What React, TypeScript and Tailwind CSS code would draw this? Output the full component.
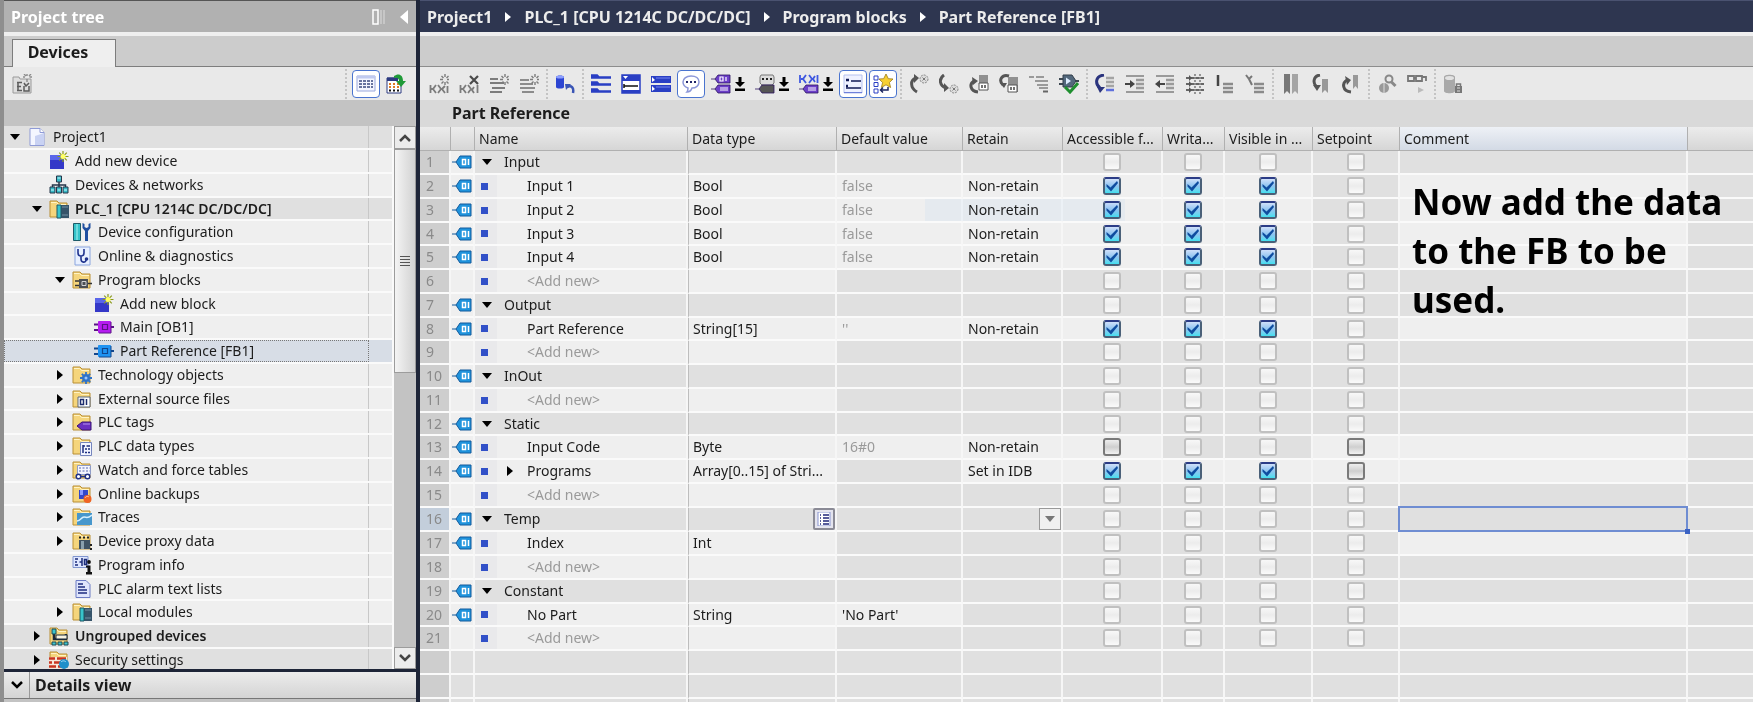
import React, { useState } from 'react'

type Check = 'on' | 'off' | 'disabled'

interface BlockRow {
  kind: 'section' | 'variable' | 'add' | 'blank'
  name?: string
  dataType?: string
  defaultValue?: string
  dimmed?: boolean
  retain?: string
  checks?: Check[]
  expandable?: boolean
}

interface TreeItem {
  label: string
  level: number
  icon: string
  state?: 'open' | 'closed'
  shaded?: boolean
  bold?: boolean
  selected?: boolean
}

const allOn: Check[] = ['on', 'on', 'on', 'disabled']
const allDisabled: Check[] = ['disabled', 'disabled', 'disabled', 'disabled']

const rows: BlockRow[] = [
  { kind: 'section', name: 'Input' },
  { kind: 'variable', name: 'Input 1', dataType: 'Bool', defaultValue: 'false', dimmed: true, retain: 'Non-retain', checks: allOn },
  { kind: 'variable', name: 'Input 2', dataType: 'Bool', defaultValue: 'false', dimmed: true, retain: 'Non-retain', checks: allOn },
  { kind: 'variable', name: 'Input 3', dataType: 'Bool', defaultValue: 'false', dimmed: true, retain: 'Non-retain', checks: allOn },
  { kind: 'variable', name: 'Input 4', dataType: 'Bool', defaultValue: 'false', dimmed: true, retain: 'Non-retain', checks: allOn },
  { kind: 'add' },
  { kind: 'section', name: 'Output' },
  { kind: 'variable', name: 'Part Reference', dataType: 'String[15]', defaultValue: "''", dimmed: true, retain: 'Non-retain', checks: allOn },
  { kind: 'add' },
  { kind: 'section', name: 'InOut' },
  { kind: 'add' },
  { kind: 'section', name: 'Static' },
  { kind: 'variable', name: 'Input Code', dataType: 'Byte', defaultValue: '16#0', dimmed: true, retain: 'Non-retain', checks: ['off', 'disabled', 'disabled', 'off'] },
  { kind: 'variable', name: 'Programs', dataType: 'Array[0..15] of Stri...', retain: 'Set in IDB', checks: ['on', 'on', 'on', 'off'], expandable: true },
  { kind: 'add' },
  { kind: 'section', name: 'Temp' },
  { kind: 'variable', name: 'Index', dataType: 'Int' },
  { kind: 'add' },
  { kind: 'section', name: 'Constant' },
  { kind: 'variable', name: 'No Part', dataType: 'String', defaultValue: "'No Part'" },
  { kind: 'add' },
  { kind: 'blank' },
  { kind: 'blank' },
  { kind: 'blank' },
]

const treeItems: TreeItem[] = [
  { label: 'Project1', level: 0, icon: 'project', state: 'open', shaded: true },
  { label: 'Add new device', level: 1, icon: 'addNew' },
  { label: 'Devices & networks', level: 1, icon: 'network' },
  { label: 'PLC_1 [CPU 1214C DC/DC/DC]', level: 1, icon: 'plc', state: 'open', shaded: true, bold: true },
  { label: 'Device configuration', level: 2, icon: 'config' },
  { label: 'Online & diagnostics', level: 2, icon: 'diagnostics' },
  { label: 'Program blocks', level: 2, icon: 'blocks', state: 'open' },
  { label: 'Add new block', level: 3, icon: 'addNew' },
  { label: 'Main [OB1]', level: 3, icon: 'ob' },
  { label: 'Part Reference [FB1]', level: 3, icon: 'fb', selected: true },
  { label: 'Technology objects', level: 2, icon: 'technology', state: 'closed' },
  { label: 'External source files', level: 2, icon: 'external', state: 'closed' },
  { label: 'PLC tags', level: 2, icon: 'tags', state: 'closed' },
  { label: 'PLC data types', level: 2, icon: 'dataTypes', state: 'closed' },
  { label: 'Watch and force tables', level: 2, icon: 'watch', state: 'closed' },
  { label: 'Online backups', level: 2, icon: 'backups', state: 'closed' },
  { label: 'Traces', level: 2, icon: 'traces', state: 'closed' },
  { label: 'Device proxy data', level: 2, icon: 'proxy', state: 'closed' },
  { label: 'Program info', level: 2, icon: 'info' },
  { label: 'PLC alarm text lists', level: 2, icon: 'textList' },
  { label: 'Local modules', level: 2, icon: 'plc', state: 'closed' },
  { label: 'Ungrouped devices', level: 1, icon: 'ungrouped', state: 'closed', shaded: true, bold: true },
  { label: 'Security settings', level: 1, icon: 'security', state: 'closed', shaded: true },
]

const levelPadding = ['pl-px', 'pl-[23px]', 'pl-[46px]', 'pl-[68px]']

const Folder = () => (
  <>
    <path d="M1 2h7l2 2h8v14H1z" fill="#f5d57c" stroke="#b98f35" />
    <path d="M2 3.500h5.500l2 2H17" fill="none" stroke="#fff3c4" />
  </>
)

const Spark = ({ color, core }: { color: string; core: string }) => (
  <>
    <path d="M14 0v11M8.500 5.500h11M10.200 1.700l7.600 7.600M17.800 1.700l-7.600 7.600" stroke={color} strokeWidth="1.200" />
    <circle cx="14" cy="5.500" r="2.500" fill={core} />
  </>
)

const BlockShape = ({ fill, dark }: { fill: string; dark: string }) => (
  <>
    <path d="M0 7.500h5M0 13h5M16 10h4" stroke={dark} strokeWidth="2" />
    <path d="M4.500 4.500h12v11h-12z" fill={fill} stroke={fill} />
    <path d="M5 16h12V5" fill="none" stroke={dark} />
    <path d="M8.500 7.500h5v5h-5z" fill="none" stroke={dark} strokeWidth="1.200" />
  </>
)

// Icons of the project tree, all on a 20 x 20 canvas
const treeIcons: Record<string, React.ReactNode> = {
  project: (
    <>
      <path d="M3 1.500h10l4 4v13H3z" fill="#f4f6ff" stroke="#8f9bd6" />
      <path d="M8 18V9l9-3v12z" fill="#c9d2f3" />
      <path d="M13 1.500v4h4" fill="#fff" stroke="#8f9bd6" />
    </>
  ),
  addNew: (
    <>
      <path d="M1 4h14v14H1z" fill="#3438c8" />
      <path d="M1 4h14v5H1z" fill="#5a66ea" />
      <Spark color="#8b9a1c" core="#ffff66" />
    </>
  ),
  network: (
    <>
      <path d="M10 6v6M3.500 13v-3h13v3" fill="none" stroke="#26364a" strokeWidth="1.500" />
      <path d="M7.500 1h5v6h-5zM1 12h5v6H1zM7.500 12h5v6h-5zM14 12h5v6h-5z" fill="#35b9c6" stroke="#26364a" />
      <path d="M8.500 3h3M2 15h3M8.500 15h3M15 15h3" stroke="#c9fbff" />
    </>
  ),
  plc: (
    <>
      <Folder />
      <path d="M8 6h12v13H8z" fill="#36546a" />
      <path d="M8 6h4v13H8z" fill="#38c4cc" stroke="#1c5664" />
      <path d="M13 8h6M13 16h6" stroke="#7391a4" />
    </>
  ),
  config: (
    <>
      <path d="M1.500 1.500h7v17h-7z" fill="#35c3c9" stroke="#1d5b68" />
      <path d="M5 2v16" stroke="#a9f2f2" />
      <path d="M10.500 1v5l2.500 3v10h3V9l2.500-3V1l-2 1v3l-2 1-2-1V2z" fill="#1f4fa0" />
    </>
  ),
  diagnostics: (
    <>
      <path d="M3 1h15v18H3z" fill="#e8f0ff" stroke="#8aa5df" />
      <path d="M6 3v4c0 4 6 4 6 0V3M9 10v3c0 4 5 4 5 1" fill="none" stroke="#20348f" strokeWidth="1.600" />
      <circle cx="14.500" cy="13" r="1.800" fill="#20348f" />
    </>
  ),
  blocks: (
    <>
      <Folder />
      <path d="M3 11h4M3 15.500h4M16 13.500h4" stroke="#333" strokeWidth="1.600" />
      <path d="M7 9h9v9H7z" fill="#4b4f54" />
      <path d="M10 11.500h4v4h-4z" fill="none" stroke="#d4d4d4" />
    </>
  ),
  ob: <BlockShape fill="#b51cf0" dark="#5a1285" />,
  fb: <BlockShape fill="#1f93f2" dark="#12468c" />,
  technology: (
    <>
      <Folder />
      <circle cx="14" cy="13" r="4" fill="#2f73c8" />
      <path d="M14 7v12M8 13h12M9.800 8.800l8.400 8.400M18.200 8.800l-8.400 8.400" stroke="#2f73c8" strokeWidth="1.800" />
      <circle cx="14" cy="13" r="1.500" fill="#9cc8ff" />
    </>
  ),
  external: (
    <>
      <Folder />
      <path d="M6 8h12v10H6z" fill="#fff" stroke="#59667d" />
      <path d="M8.500 10.500h3v5h-3zM14.500 10v6" fill="none" stroke="#1c2c6e" strokeWidth="1.500" />
    </>
  ),
  tags: (
    <>
      <Folder />
      <path d="M5 14l5-4h9v8h-9z" fill="#6a2fc0" stroke="#3b1475" />
      <path d="M11 12h7" stroke="#b694ee" />
    </>
  ),
  dataTypes: (
    <>
      <Folder />
      <path d="M8.500 6.500h11v13h-11z" fill="#f2f5ff" stroke="#7585bd" />
      <path d="M11 9v8M11 10h2M14.500 10H18M13 13h2M16 13h2M13 16.500h2M16 16.500h2" stroke="#1e2f80" strokeWidth="1.500" />
    </>
  ),
  watch: (
    <>
      <Folder />
      <path d="M5.500 5.500h13v9h-13z" fill="#f4f6ff" stroke="#8e9cc7" />
      <path d="M7 8h11M7 11h11" stroke="#5667ae" strokeDasharray="2 1.500" />
      <path d="M9 16.500h4" stroke="#213387" strokeWidth="1.500" />
      <circle cx="6.500" cy="16.500" r="2.300" fill="#fff" stroke="#213387" strokeWidth="1.500" />
      <circle cx="15.500" cy="16.500" r="2.300" fill="#fff" stroke="#213387" strokeWidth="1.500" />
    </>
  ),
  backups: (
    <>
      <Folder />
      <path d="M7 6h9v9H7z" fill="#3347c9" />
      <path d="M8 6h3v5H8z" fill="#8b9bff" />
      <circle cx="15.500" cy="15" r="4" fill="#f06423" />
      <path d="M13 14c1-2 3-2 4-1" fill="none" stroke="#ffb38a" />
    </>
  ),
  traces: (
    <>
      <Folder />
      <path d="M5 6h15v12H5z" fill="#4797cc" />
      <path d="M5 14c4 0 4-4 7-4s3 2 8-2" fill="none" stroke="#d6f0ff" strokeWidth="1.500" />
    </>
  ),
  proxy: (
    <>
      <Folder />
      <path d="M7 9h11v9H7z" fill="#3f5363" />
      <path d="M7 6.500h2M11 6.500h2M15 6.500h2" stroke="#222" strokeWidth="2" />
      <path d="M9 10h3v8H9z" fill="#89a0ad" />
      <path d="M19 13v2M19 17v2" stroke="#222" strokeWidth="2" />
    </>
  ),
  info: (
    <>
      <path d="M1 1.500h15v11H1z" fill="#dfe7ff" stroke="#8095cf" />
      <path d="M3 4h3M3 7h2M3 10h3M7.500 7h2M10 3v8M12.500 4.500h2v5h-2z" stroke="#1d2d7a" strokeWidth="1.500" fill="none" />
      <circle cx="17" cy="7" r="1.900" fill="#111" />
      <path d="M14 10.500h4.500v6.500H20v2.500h-6V17h1.500v-4.500H14z" fill="#111" />
    </>
  ),
  textList: (
    <>
      <path d="M4 1.500h10l4 4v13H4z" fill="#dfe5fb" stroke="#6c7cc4" />
      <path d="M6 5h5M6 8h7M6 11h9M6 14h9" stroke="#1e2c80" strokeWidth="1.600" />
    </>
  ),
  ungrouped: (
    <>
      <Folder />
      <path d="M5 4v9h12V8" fill="none" stroke="#1c2a3a" strokeWidth="2.500" />
      <path d="M3 3h4v5H3z" fill="#3cc4cc" stroke="#1c4b55" />
      <path d="M7 9h11v4H7z" fill="#f6f2e0" stroke="#1c2a3a" />
      <path d="M3 16h4v3H3zM9 16h4v3H9zM15 16h4v3h-4z" fill="#3cc4cc" stroke="#1c4b55" />
    </>
  ),
  security: (
    <>
      <Folder />
      <path d="M0 7h18v12H0z" fill="#f6e6da" />
      <path d="M0 8.500h6M8 8.500h9M0 12.500h3M5 12.500h7M0 16.500h7M9 16.500h5" stroke="#c8341f" strokeWidth="2.600" />
      <circle cx="15" cy="14" r="5" fill="#1f8fc9" />
      <path d="M12 12c2-2 4-1 5 0" stroke="#a5e0fa" fill="none" />
    </>
  ),
}

const gray = '#7c7c7c'
const blue = '#2a3fc4'

const RowBars = ({ x = 9, color = '#9a9a9a' }: { x?: number; color?: string }) => (
  <path d={`M${x} 6h${19 - x}M${x} 10h${19 - x}M${x} 14h${19 - x}`} stroke={color} strokeWidth="2.500" />
)

const GraySpark = () => <path d="M16 0v3M16 8v3M11 5.500h3M18 5.500h2M12.500 2l2 2M19.500 2l-2 2M12.500 9.500l2-2M19.500 9.500l-2-2" stroke={gray} strokeWidth="1.400" />

const Tag = ({ y, fill }: { y: number; fill: string }) => (
  <path d={`M0 ${y + 4}h4l3-4h12v8H7l-3-4`} fill={fill} stroke="#2b1560" strokeWidth=".8" />
)

// Icons of the editor toolbar
const toolIcons: Record<string, React.ReactNode> = {
  insertRow: (
    <>
      <path d="M1.500 11v8M2 15h2l3-4M4 15l3 4M9 11l3 4-3 4M13 15l3-3M13 15l3 4M18.500 12v7" stroke={gray} strokeWidth="1.800" fill="none" />
      <GraySpark />
    </>
  ),
  deleteRow: (
    <>
      <path d="M1.500 11v8M2 15h2l3-4M4 15l3 4M9 11l3 4-3 4M15 13l-2 3 2 3M18.500 11v8" stroke={gray} strokeWidth="1.800" fill="none" />
      <path d="M11 2l8 8M19 2l-8 8" stroke="#4a4a4a" strokeWidth="2.200" />
    </>
  ),
  addRow: (
    <>
      <path d="M1 5h8M1 9h14M3 14h13M1 18h12" stroke={gray} strokeWidth="2.200" />
      <GraySpark />
    </>
  ),
  addRowBelow: (
    <>
      <path d="M1 6h9M1 10h13M1 14h15M3 18h12" stroke="#8c8c8c" strokeWidth="2.200" />
      <GraySpark />
    </>
  ),
  reset: (
    <>
      <path d="M1 3c0-2 8-2 8 0v10c0 2-8 2-8 0z" fill="#2c45d2" />
      <ellipse cx="5" cy="3" rx="4" ry="1.500" fill="#8ea0ff" />
      <path d="M12 13c5-2 7 1 6 6" fill="none" stroke="#3a55b5" strokeWidth="2.500" />
      <path d="M10 10l6 0-5 6z" fill="#3a55b5" />
    </>
  ),
  expandAll: (
    <path d="M0 1.500h6l2 2h12M0 3.500h20M0 8.500h6l2 2h12M0 10.500h20M0 15.500h6l2 2h12M0 17.500h20" stroke={blue} strokeWidth="2.400" fill="none" />
  ),
  splitView: (
    <>
      <path d="M1 1h18v18H1z" fill="#fff" stroke={blue} strokeWidth="1.500" />
      <path d="M1 1h18v6H1zM1 16h18v3H1z" fill={blue} />
      <path d="M2 2h5L4.500 5z" fill="#fff" />
      <path d="M3 12h14M3 10v4" stroke="#111" strokeWidth="1.500" />
    </>
  ),
  collapse: (
    <>
      <path d="M0 2h20v7H0zM0 11h20v7H0z" fill={blue} />
      <path d="M1 3l3 3-3 2zM1 12l3 3-3 2z" fill="#fff" />
      <path d="M5 4h14M5 13h14" stroke="#7585f0" />
    </>
  ),
  comment: (
    <>
      <path d="M10 2c5 0 8 2.500 8 6s-3 6-7 6c-1 3-3 4-5 4 1-1 1-3 1-4-3-1-5-3-5-6s3-6 8-6z" fill="#fff" stroke="#8c97d8" strokeWidth="1.500" />
      <path d="M5 8h2M9 8h2M13 8h2" stroke="#20266b" strokeWidth="2" />
    </>
  ),
  tagPair: (
    <>
      <Tag y={1} fill="#6d3fc9" />
      <Tag y={11} fill="#6d3fc9" />
      <path d="M9 3h3v4H9zM15 3v4M9 14h8M9 16h8" stroke="#fff" strokeWidth="1.200" fill="none" />
    </>
  ),
  tagComment: (
    <>
      <path d="M6 1h12l1 2v6l-2 2H7L5 9V3z" fill="#dcdcdc" stroke="#777" />
      <path d="M7 5h2M11 5h2M15 5h2" stroke="#222" strokeWidth="2" />
      <Tag y={11} fill="#555" />
    </>
  ),
  tagValue: (
    <>
      <path d="M1 1v8M2 5h2l3-4M4 5l3 4M10 1l3 4-3 4M16 2l-2 3 2 3M18.500 1v8" stroke="#3f58e0" strokeWidth="1.800" fill="none" />
      <Tag y={11} fill="#6d3fc9" />
      <path d="M9 14h8M9 16h8" stroke="#fff" />
    </>
  ),
  listView: (
    <>
      <path d="M1 1h18v18H1z" fill="#eef1ff" stroke="#b6c2ef" />
      <path d="M8 7h10M3 14h15" stroke="#111a55" strokeWidth="1.500" />
      <path d="M3 6h3M3 12h2" stroke="#111a55" strokeWidth="2.500" />
      <path d="M1 18.500h18" stroke="#6f80da" />
    </>
  ),
  favorites: (
    <>
      <path d="M1 2h4v4H1zM1 8.500h4v4H1zM1 15h4v4H1z" fill="#fff" stroke={blue} />
      <path d="M13 0l2.300 4.700 4.700.3-3.600 3.500 1.200 5-4.600-2.700-4.600 2.700 1.200-5L6 5l4.700-.3z" fill="#f7cf33" stroke="#9a7a18" strokeWidth=".8" />
      <path d="M15 13v3H8M10 13.500L7.500 16l2.500 2.500" stroke="#1b2560" strokeWidth="1.500" fill="none" />
    </>
  ),
  prevError: (
    <>
      <path d="M8 18C1 14 1 6 7 4" fill="none" stroke="#555" strokeWidth="3" />
      <path d="M5 0l5 4-5 5z" fill="#555" />
      <circle cx="15" cy="5" r="4" fill="#ddd" stroke="#888" strokeDasharray="2 1" />
      <path d="M13.500 3.500l3 3M16.500 3.500l-3 3" stroke="#777" />
    </>
  ),
  nextError: (
    <>
      <path d="M5 1C-1 5 1 12 7 14" fill="none" stroke="#555" strokeWidth="3" />
      <path d="M5 9l5 5-5 4z" fill="#555" />
      <circle cx="15" cy="15" r="4" fill="#ddd" stroke="#888" strokeDasharray="2 1" />
      <path d="M13.500 13.500l3 3M16.500 13.500l-3 3" stroke="#777" />
    </>
  ),
  upload: (
    <>
      <path d="M9 18C1 17 0 10 5 7" fill="none" stroke="#555" strokeWidth="3" />
      <path d="M3 3l6 4-5 4z" fill="#555" />
      <path d="M10 1h9v15h-9z" fill="#909090" />
      <path d="M10 9h9v7h-9z" fill="#fff" stroke="#555" />
      <path d="M13 11v3M16 11v3" stroke="#444" strokeWidth="1.500" />
    </>
  ),
  download: (
    <>
      <path d="M10 2C3 0-1 6 4 11" fill="none" stroke="#555" strokeWidth="3" />
      <path d="M1 9l7 0-3 5z" fill="#555" />
      <path d="M9 3h10v15H9z" fill="#909090" />
      <path d="M9 11h9v7H9z" fill="#fff" stroke="#555" />
      <path d="M12 13v3M15 13v3" stroke="#444" strokeWidth="1.500" />
    </>
  ),
  absolute: (
    <>
      <path d="M0 3h5M7 3h8M6 7h13M8 11h11M10 14h9" stroke="#9a9a9a" strokeWidth="2.200" />
      <path d="M14 17.500h5" stroke="#666" strokeWidth="2" />
    </>
  ),
  compile: (
    <>
      <path d="M0 5h5M0 10h5M15 7h5" stroke="#3d4852" strokeWidth="2" />
      <path d="M4 1h9l4 6-4 6H4z" fill="#53687c" stroke="#333f4a" />
      <path d="M7 3.500l5 3.500-5 3.500z" fill="#dcecff" />
      <path d="M6 13l5 5 8-9" fill="none" stroke="#1f8f2f" strokeWidth="3" />
    </>
  ),
  gotoNetwork: (
    <>
      <path d="M9 1C0 2 0 10 5 14" fill="none" stroke="#2b347e" strokeWidth="3" />
      <path d="M2 13l8 0-5 6z" fill="#2b347e" />
      <path d="M11 4h8M11 8h8M11 12h8" stroke="#a4a4a4" strokeWidth="2.500" />
      <path d="M11 16h8" stroke="#5f70dc" strokeWidth="2.500" />
    </>
  ),
  indent: (
    <>
      <path d="M1 2h18M1 18h18" stroke="#9a9a9a" strokeWidth="2" />
      <RowBars x={11} />
      <path d="M0 10h7" stroke="#444" strokeWidth="2" />
      <path d="M5 6l5 4-5 4z" fill="#444" />
    </>
  ),
  outdent: (
    <>
      <path d="M1 2h18M1 18h18" stroke="#9a9a9a" strokeWidth="2" />
      <RowBars x={11} />
      <path d="M3 10h7" stroke="#444" strokeWidth="2" />
      <path d="M5 6l-5 4 5 4z" fill="#444" />
    </>
  ),
  grid: (
    <>
      <path d="M1 4h18M1 10h18M1 16h18" stroke="#666" strokeWidth="1.800" />
      <path d="M4 1l3 3-3 3zM4 7l3 3-3 3zM4 13l3 3-3 3z" fill="#555" />
      <path d="M10 0v20M15 0v20" stroke="#8d8d8d" strokeWidth="1.800" strokeDasharray="2 1" />
    </>
  ),
  markLine: (
    <>
      <path d="M3 1v11" stroke="#444" strokeWidth="2.500" />
      <path d="M8 10h10M8 14h10M8 18h10" stroke="#8a8a8a" strokeWidth="2.500" />
    </>
  ),
  unmarkLine: (
    <>
      <path d="M1 1l3 4 3-3M4 5l3 6" stroke="#777" strokeWidth="2" fill="none" />
      <path d="M9 10h10M9 14h10M9 18h10" stroke="#8a8a8a" strokeWidth="2.500" />
    </>
  ),
  bookmarks: (
    <>
      <path d="M3 0h6v20l-3-3-3 3z" fill="#777" />
      <path d="M11 0h6v20l-3-3-3 3z" fill="#a5a5a5" />
    </>
  ),
  nextBookmark: (
    <>
      <path d="M9 1C2 2 2 9 5 12" fill="none" stroke="#555" strokeWidth="3" />
      <path d="M2 11h8l-4 6z" fill="#555" />
      <path d="M11 5h6v14l-3-3-3 3z" fill="#999" />
    </>
  ),
  prevBookmark: (
    <>
      <path d="M10 18C1 17 1 9 6 6" fill="none" stroke="#555" strokeWidth="3" />
      <path d="M4 2l6 4-4 5z" fill="#555" />
      <path d="M12 1h5v14l-2.500-3L12 15z" fill="#999" />
    </>
  ),
  crossRef: (
    <>
      <circle cx="12" cy="5" r="3.500" fill="none" stroke="#888" strokeWidth="2" />
      <path d="M14.500 8l4 4" stroke="#888" strokeWidth="3" />
      <circle cx="7" cy="14" r="5" fill="#999" />
      <path d="M7 9v10" stroke="#ddd" />
    </>
  ),
  monitor: (
    <>
      <path d="M1 2h6v5H1zM9 2h6v5H9zM7 4h2M15 3h4v4" fill="none" stroke="#777" strokeWidth="1.800" />
      <path d="M11 13l6 3-6 3z" fill="#bbb" />
    </>
  ),
  lockData: (
    <>
      <path d="M1 3c0-3 11-3 11 0v14c0 3-11 3-11 0z" fill="#a9a9a9" />
      <ellipse cx="6.500" cy="4" rx="4.500" ry="2" fill="#e2e2e2" />
      <path d="M12 12h7v7h-7z" fill="#777" />
      <path d="M13.500 12v-2h4v2" stroke="#777" fill="none" strokeWidth="1.500" />
      <path d="M14 14h3M14 17h3" stroke="#ddd" />
    </>
  ),
  addObject: (
    <>
      <path d="M1 3h6l1 2h11v14H1z" fill="#dedede" stroke="#9a9a9a" />
      <path d="M5 8.500h5M5 12.500h4M5 16.500h5M6 8v9M12 9l2 3 3-3M12 12v5h5v-5" stroke="#5c5c5c" strokeWidth="1.500" fill="none" />
      <path d="M15 0v2M15 5v3M11 3h2M17.500 3H20M12 0l2 2M19 0l-2 2" stroke="#8c8c8c" strokeWidth="1.400" />
    </>
  ),
  overview: (
    <>
      <path d="M1 2h18v15H1z" fill="#f4f6ff" stroke="#9aa8dc" />
      <path d="M1 2h18v2.500H1z" fill="#c0caf0" />
      <path d="M3 7h14M3 10h14M3 13h14" stroke="#68749f" strokeWidth="1.800" strokeDasharray="3 1" />
    </>
  ),
  openView: (
    <>
      <path d="M1 4h14v15H1z" fill="#fff" stroke="#2c3a80" />
      <path d="M1 3.500h11V7H1z" fill="#2c3a80" />
      <path d="M3 10h2M7 10h2M11 10h2M3 13h2M7 13h2M11 13h2" stroke="#e07b24" strokeWidth="2" />
      <path d="M3 16.500h2M7 16.500h2M11 16.500h2" stroke="#111" strokeWidth="2" />
      <path d="M8 2c4-3 9-2 9 5h3l-5 6-5-6h3c0-3-2-4-5-3z" fill="#1f9a38" />
    </>
  ),
}

const Icon = ({ art }: { art: React.ReactNode }) => (
  <svg viewBox="0 0 20 20" className="size-5 shrink-0" aria-hidden="true">{art}</svg>
)

const Arrow = ({ open }: { open: boolean }) => (
  <svg viewBox="0 0 12 12" className="size-3" aria-hidden="true">
    <path d={open ? 'M1 3h10L6 9z' : 'M3 1v10l6-5z'} fill="#000" />
  </svg>
)

const ToolButton = ({ icon, label, active = false }: { icon: string; label: string; active?: boolean }) => (
  <button
    aria-label={label}
    className={`flex size-7 shrink-0 items-center justify-center rounded-sm ${active ? 'border border-[#4a74cf] bg-white' : ''}`}
  >
    <Icon art={toolIcons[icon]} />
  </button>
)

const MenuToolButton = ({ icon, label }: { icon: string; label: string }) => (
  <div className="flex shrink-0">
    <ToolButton icon={icon} label={label} />
    <button aria-label={`${label} options`} className="flex w-3.5 items-center">
      <svg viewBox="0 0 10 14" className="h-3.5 w-2.5" aria-hidden="true">
        <path d="M3.500 0h3v5H10L5 10 0 5h3.500zM0 11.500h10V14H0z" fill="#000" />
      </svg>
    </button>
  </div>
)

const Divider = () => <div className="mx-px h-[30px] shrink-0 border-l-2 border-dotted border-[#c4c4c4]" />

const CheckCell = ({ check, label }: { check: Check; label: string }) => {
  const [checked, setChecked] = useState(check === 'on')
  const disabled = check === 'disabled'
  let look = 'border-[#c0c0c0] bg-linear-to-b from-[#f8f8f8] via-[#ececec] to-[#fafafa]'
  if (check === 'off') look = 'border-[#7a7a7a] bg-linear-to-b from-[#eeeeee] via-[#cfcfcf] to-[#f2f2f2]'
  if (checked) look = 'border-[#4a6078] border-t-[#2b3c86] bg-linear-to-b from-[#cfe0fa] via-[#8fc4f0] to-[#3ee0f0]'

  return (
    <td className={disabled ? 'bg-[#e0e0e0]' : 'bg-[#efefef]'}>
      <div className="relative mx-auto size-[18px]">
        <input
          type="checkbox"
          aria-label={label}
          checked={checked}
          disabled={disabled}
          onChange={(e) => setChecked(e.target.checked)}
          className={`block size-[18px] appearance-none rounded-[3px] border-2 ${look}`}
        />
        {checked && (
          <svg viewBox="0 0 18 18" className="pointer-events-none absolute inset-0 size-[18px]" aria-hidden="true">
            <path d="M3.500 7l4 3.500L14 4l1 2-7 8.500-4.500-5z" fill="#0f4da0" />
          </svg>
        )}
      </div>
    </td>
  )
}

const ProjectTree = () => (
  <ul role="tree" aria-label="Project tree" className="min-w-0 flex-1 overflow-hidden pr-0.5">
    {treeItems.map((item, index) => {
      let background = 'bg-[#efefef]'
      if (item.shaded) background = 'bg-[#e0e0e0]'
      if (item.selected) background = 'bg-[#d7dde6]'
      return (
        <li
          key={item.label}
          role="treeitem"
          aria-selected={item.selected ?? false}
          className={`flex border-b-2 border-[#fafafa] ${index % 4 === 3 ? 'h-[23px]' : 'h-6'} ${background}`}
        >
          <div
            className={`flex min-w-0 flex-1 items-center ${levelPadding[item.level]} ${
              item.selected ? 'outline-1 -outline-offset-1 outline-dotted outline-[#777]' : 'border-r border-[#c8c8c8]'
            }`}
          >
            <button aria-label={`Toggle ${item.label}`} disabled={!item.state} className="flex w-5 shrink-0 justify-center">
              {item.state && <Arrow open={item.state === 'open'} />}
            </button>
            <span className="ml-0.5"><Icon art={treeIcons[item.icon]} /></span>
            <span className={`ml-1.5 truncate ${item.bold ? 'font-semibold' : ''}`}>{item.label}</span>
          </div>
          <div className="w-[23px] shrink-0" />
        </li>
      )
    })}
  </ul>
)

const ScrollBar = () => (
  <div className="flex w-[22px] shrink-0 flex-col bg-[#c3c3c3]">
    <button aria-label="Scroll up" className="flex h-[23px] items-center justify-center border border-[#9c9c9c] bg-[#ececec]">
      <svg viewBox="0 0 14 10" className="h-2.5 w-3.5"><path d="M2 8l5-5 5 5" fill="none" stroke="#444" strokeWidth="2.500" /></svg>
    </button>
    <div className="flex flex-1 flex-col">
      <div className="flex h-[45%] items-center justify-center border border-[#9c9c9c] bg-linear-to-r from-[#f4f4f4] to-[#d2d2d2]">
        <svg viewBox="0 0 10 10" className="size-2.5"><path d="M0 .5h10M0 3.500h10M0 6.500h10M0 9.500h10" stroke="#555" /></svg>
      </div>
    </div>
    <button aria-label="Scroll down" className="flex h-[22px] items-center justify-center border border-[#9c9c9c] bg-[#ececec]">
      <svg viewBox="0 0 14 10" className="h-2.5 w-3.5"><path d="M2 2l5 5 5-5" fill="none" stroke="#444" strokeWidth="2.500" /></svg>
    </button>
  </div>
)

const Sidebar = () => (
  <aside className="flex w-[420px] shrink-0 flex-col border-r-4 border-l-4 border-r-[#1e2538] border-l-[#8e8e8e] bg-[#c3c3c3]">
    <header className="flex h-8 shrink-0 items-center border-t border-[#555] bg-[#b1b1b1] pr-2 pl-[7px]">
      <h2 className="flex-1 text-base font-bold text-white">Project tree</h2>
      <button aria-label="Dock panel" className="mr-3.5">
        <svg viewBox="0 0 14 16" className="h-4 w-3.5"><path d="M1 1h5v14H1z" fill="none" stroke="#fff" strokeWidth="1.500" /><path d="M9 1v14M12 1v14" stroke="#ddd" /></svg>
      </button>
      <button aria-label="Collapse panel">
        <svg viewBox="0 0 8 14" className="h-3.5 w-2"><path d="M8 0v14L0 7z" fill="#fff" /></svg>
      </button>
    </header>
    <div role="tablist" className="flex h-[35px] shrink-0 items-end border-t-4 border-b border-t-[#efefef] border-b-[#7d7d7d] bg-[#cccccc] pl-2">
      <button
        role="tab"
        aria-selected="true"
        className="-mb-px h-7 w-[104px] border border-b-0 border-[#7d7d7d] bg-[#efefef] pr-3 pb-1 text-base leading-6 font-bold"
      >
        Devices
      </button>
    </div>
    <div className="flex h-[33px] shrink-0 items-center bg-[#e9e9e9] pr-1.5 pl-1">
      <ToolButton icon="addObject" label="Add object" />
      <div className="flex-1" />
      <Divider />
      <div className="ml-1 flex gap-0.5">
        <ToolButton icon="overview" label="Overview" active />
        <ToolButton icon="openView" label="Open view" />
      </div>
    </div>
    <div className="h-[26px] shrink-0" />
    <div className="flex min-h-0 flex-1 bg-[#fafafa]">
      <ProjectTree />
      <ScrollBar />
    </div>
    <section className="shrink-0 border-t-[3px] border-[#1e2538] bg-[#c3c3c3] pb-[3px]">
      <div className="flex h-[27px] items-center border-b border-[#777] bg-linear-to-b from-[#ececec] to-[#d4d4d4]">
        <button aria-label="Expand details view" className="flex h-full w-[26px] items-center justify-center border-r border-[#999]">
          <svg viewBox="0 0 14 10" className="h-2.5 w-3.5"><path d="M2 2l5 5 5-5" fill="none" stroke="#000" strokeWidth="2.500" /></svg>
        </button>
        <h2 className="pl-[5px] text-base font-bold">Details view</h2>
      </div>
    </section>
  </aside>
)

const breadcrumbs = ['Project1', 'PLC_1 [CPU 1214C DC/DC/DC]', 'Program blocks', 'Part Reference [FB1]']

const Breadcrumbs = () => (
  <nav className="h-8 shrink-0 border-t border-[#4a5270] bg-[#2e3650] pl-[7px]">
    <ol className="flex h-full items-center text-base font-bold text-[#ececec]">
      {breadcrumbs.map((crumb, index) => (
        <li key={crumb} className="flex items-center whitespace-nowrap">
          {index > 0 && (
            <svg viewBox="0 0 6 10" className="mx-[13px] h-2.5 w-1.5" aria-hidden="true"><path d="M0 0v10l6-5z" fill="#fff" /></svg>
          )}
          <a href="#">{crumb}</a>
        </li>
      ))}
    </ol>
  </nav>
)

const Toolbar = () => (
  <div role="toolbar" className="flex h-[33px] shrink-0 items-center gap-0.5 overflow-hidden bg-[#e9e9e9] pl-[5px]">
    <ToolButton icon="insertRow" label="Insert row" />
    <ToolButton icon="deleteRow" label="Delete row" />
    <ToolButton icon="addRow" label="Add row" />
    <ToolButton icon="addRowBelow" label="Add row below" />
    <Divider />
    <ToolButton icon="reset" label="Reset start values" />
    <Divider />
    <ToolButton icon="expandAll" label="Open all networks" />
    <ToolButton icon="splitView" label="Close all networks" />
    <ToolButton icon="collapse" label="Collapse" />
    <ToolButton icon="comment" label="Network comments" active />
    <MenuToolButton icon="tagPair" label="Operands" />
    <MenuToolButton icon="tagComment" label="Tag comments" />
    <MenuToolButton icon="tagValue" label="Tag values" />
    <ToolButton icon="listView" label="Tag information" active />
    <ToolButton icon="favorites" label="Favorites" active />
    <Divider />
    <ToolButton icon="prevError" label="Previous error" />
    <ToolButton icon="nextError" label="Next error" />
    <ToolButton icon="upload" label="Upload" />
    <ToolButton icon="download" label="Download" />
    <ToolButton icon="absolute" label="Update calls" />
    <ToolButton icon="compile" label="Compile" />
    <Divider />
    <ToolButton icon="gotoNetwork" label="Go to network" />
    <ToolButton icon="indent" label="Indent" />
    <ToolButton icon="outdent" label="Outdent" />
    <ToolButton icon="grid" label="Format" />
    <ToolButton icon="markLine" label="Comment line" />
    <ToolButton icon="unmarkLine" label="Uncomment line" />
    <Divider />
    <ToolButton icon="bookmarks" label="Bookmarks" />
    <ToolButton icon="nextBookmark" label="Next bookmark" />
    <ToolButton icon="prevBookmark" label="Previous bookmark" />
    <Divider />
    <ToolButton icon="crossRef" label="Cross reference" />
    <ToolButton icon="monitor" label="Monitoring" />
    <Divider />
    <ToolButton icon="lockData" label="Retentive data" />
  </div>
)

const checkLabels = ['Accessible', 'Writable', 'Visible', 'Setpoint']
const headers = ['', '', 'Name', 'Data type', 'Default value', 'Retain', 'Accessible f...', 'Writa...', 'Visible in ...', 'Setpoint', 'Comment', '']

const TableRow = ({ row, index }: { row: BlockRow; index: number }) => {
  const light = 'bg-[#efefef]'
  const shaded = 'bg-[#e0e0e0]'
  const isSection = row.kind === 'section'
  const isBlank = row.kind === 'blank'
  const isVariable = row.kind === 'variable'
  const plain = isSection || isBlank
  const active = row.name === 'Temp'

  return (
    <tr className={index % 4 === 3 ? 'h-[23px]' : 'h-6'}>
      <td className={`pl-1.5 text-[#8a8a8a] ${active ? 'bg-[#c3cedb]' : 'bg-[#cecece]'}`}>{isBlank ? '' : index + 1}</td>
      <td className={isBlank ? shaded : light}>
        {(isSection || isVariable) && (
          <svg viewBox="0 0 20 14" className="ml-px h-3.5 w-5" aria-hidden="true">
            <path d="M0 7h4l4-6h11v12H8L4 7" fill="#1f93dc" stroke="#125a9c" />
            <path d="M10.500 4.500h3v5h-3zM16.500 4v6" fill="none" stroke="#fff" strokeWidth="1.500" />
          </svg>
        )}
      </td>
      <td className={plain ? shaded : 'bg-[linear-gradient(to_right,#e9e9eb_22px,#efefef_22px)]'}>
        {!isBlank && (
          <div className="flex items-center">
            {isSection ? (
              <button aria-label={`Toggle ${row.name}`} className="ml-1.5 w-[23px]"><Arrow open /></button>
            ) : (
              <>
                <span className="ml-1.5 size-[7px] bg-[#3150c8]" />
                <span className="ml-4 w-[23px]">
                  {row.expandable && <button aria-label={`Toggle ${row.name}`} className="block"><Arrow open={false} /></button>}
                </span>
              </>
            )}
            <span className={row.kind === 'add' ? 'text-[#9a9a9a]' : ''}>{row.name ?? '<Add new>'}</span>
          </div>
        )}
      </td>
      <td className={`${plain ? shaded : light} border-l border-l-[#bdbdbd] pl-1`}>
        {active ? (
          <button aria-label="Select data type" className="ml-auto flex size-[22px] items-center justify-center rounded-xs border-2 border-[#8b8b96] bg-[#e4e4ee]">
            <svg viewBox="0 0 14 14" className="size-3.5" aria-hidden="true">
              <path d="M1 0h12v14H1z" fill="#fff" stroke="#8793cf" />
              <path d="M3 3h1M6 3h6M3 6h1M6 6h6M3 9h1M6 9h6M3 12h1M6 12h6" stroke="#20267a" strokeWidth="1.500" />
            </svg>
          </button>
        ) : (
          row.dataType
        )}
      </td>
      <td className={`relative pl-[5px] ${row.defaultValue ? light : shaded} ${row.dimmed ? 'text-[#9a9a9a]' : ''}`}>
        {row.defaultValue}
        {row.name === 'Input 2' && (
          <div className="pointer-events-none absolute inset-y-0 left-[88px] z-10 w-[200px] bg-[#f5faff] mix-blend-multiply" />
        )}
      </td>
      <td className={`pl-[5px] ${row.retain ? light : shaded}`}>
        {active ? (
          <div className="relative ml-auto size-[22px]">
            <select aria-label="Retain" className="block size-[22px] appearance-none border border-[#999] bg-[#f0f0f0]">
              <option></option>
            </select>
            <svg viewBox="0 0 10 6" className="pointer-events-none absolute top-2 left-1.5 h-1.5 w-2.5" aria-hidden="true"><path d="M0 0h10L5 6z" fill="#777" /></svg>
          </div>
        ) : (
          row.retain
        )}
      </td>
      {isBlank
        ? checkLabels.map((label) => <td key={label} className={shaded} />)
        : (row.checks ?? allDisabled).map((check, i) => (
            <CheckCell key={checkLabels[i]} check={check} label={`${checkLabels[i]}, row ${index + 1}`} />
          ))}
      <td className={`relative ${isVariable ? light : shaded}`}>
        {active && (
          <div className="absolute -inset-0.5 z-10 border-2 border-[#6f8dd2]">
            <span className="absolute -right-1 -bottom-1 size-[5px] bg-[#3a62c4]" />
          </div>
        )}
      </td>
      <td className={shaded} />
    </tr>
  )
}

const BlockInterface = () => (
  <div className="relative min-h-0 flex-1 overflow-hidden bg-[#e0e0e0]">
    <table className="w-full table-fixed border-separate border-spacing-0 [&_tbody_td]:border-r-2 [&_tbody_td]:border-b-2 [&_tbody_td]:border-r-[#f6f6f6] [&_tbody_td]:border-b-[#fafafa] [&_tbody_td:last-child]:border-r-0 [&_td]:py-0 [&_td]:leading-5 [&_td]:whitespace-nowrap">
      <colgroup>
        <col className="w-[31px]" />
        <col className="w-6" />
        <col className="w-[213px]" />
        <col className="w-[149px]" />
        <col className="w-[126px]" />
        <col className="w-[100px]" />
        <col className="w-[100px]" />
        <col className="w-[62px]" />
        <col className="w-[88px]" />
        <col className="w-[87px]" />
        <col className="w-[288px]" />
        <col />
      </colgroup>
      <thead>
        <tr className="h-6">
          {headers.map((header, i) => (
            <th
              key={i}
              className={`border-r border-b border-[#b0b0b0] py-0 pl-1 text-left leading-5 font-normal whitespace-nowrap last:border-r-0 ${
                header === 'Comment' ? 'bg-linear-to-b from-[#eef1f6] to-[#d3dae5]' : 'bg-linear-to-b from-[#ececec] to-[#d6d6d6]'
              }`}
            >
              {header}
            </th>
          ))}
        </tr>
      </thead>
      <tbody>
        {rows.map((row, index) => (
          <TableRow key={index} row={row} index={index} />
        ))}
      </tbody>
    </table>
    <p className="absolute top-[50px] left-[992px] z-20 w-80 text-[35px] leading-[49px] font-bold text-black">
      Now add the data to the FB to be used.
    </p>
  </div>
)

const App: React.FC = () => (
  <div className="flex h-screen overflow-hidden bg-[#c3c3c3] font-['Noto_Sans','Open_Sans',sans-serif] text-sm text-[#1c1c1c]">
    <Sidebar />
    <main className="flex min-w-0 flex-1 flex-col">
      <Breadcrumbs />
      <div className="h-[35px] shrink-0 border-t-4 border-b border-t-[#efefef] border-b-[#8d8d8d] bg-[#cccccc]" />
      <Toolbar />
      <h1 className="h-[27px] shrink-0 bg-[#d9d9d9] pl-8 text-base leading-[27px] font-bold">Part Reference</h1>
      <BlockInterface />
    </main>
  </div>
)

export default App
